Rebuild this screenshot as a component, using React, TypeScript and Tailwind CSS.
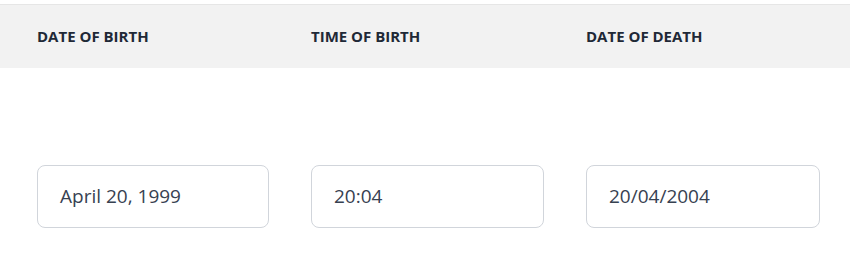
import React from "react";

const cols = [
  { label: "DATE OF BIRTH", value: "April 20, 1999", w: "w-[232px]" },
  { label: "TIME OF BIRTH", value: "20:04", w: "w-[233px]" },
  { label: "DATE OF DEATH", value: "20/04/2004", w: "w-[234px]" },
];

export default function App() {
  return (
    <div className="w-[850px] h-[272px] bg-white pt-[4px]" style={{ fontFamily: '"Open Sans", "Noto Sans", sans-serif' }}>
      <div className="h-[64px] bg-[#f2f2f2] border-t border-[#e6e6e6] grid grid-cols-[274px_275px_1fr] pl-[37px] items-center">
        {cols.map((c) => (
          <div key={c.label} className="text-[15px] font-bold text-[#1f2937] leading-none">
            {c.label}
          </div>
        ))}
      </div>
      <div className="grid grid-cols-[274px_275px_1fr] pl-[37px] pt-[97px]">
        {cols.map((c) => (
          <div key={c.label}>
            <div className={`${c.w} h-[63px] border border-[#d1d5db] rounded-[8px] flex items-center pl-[22px] text-[19px] text-[#374151]`}>
              {c.value}
            </div>
          </div>
        ))}
      </div>
    </div>
  );
}
